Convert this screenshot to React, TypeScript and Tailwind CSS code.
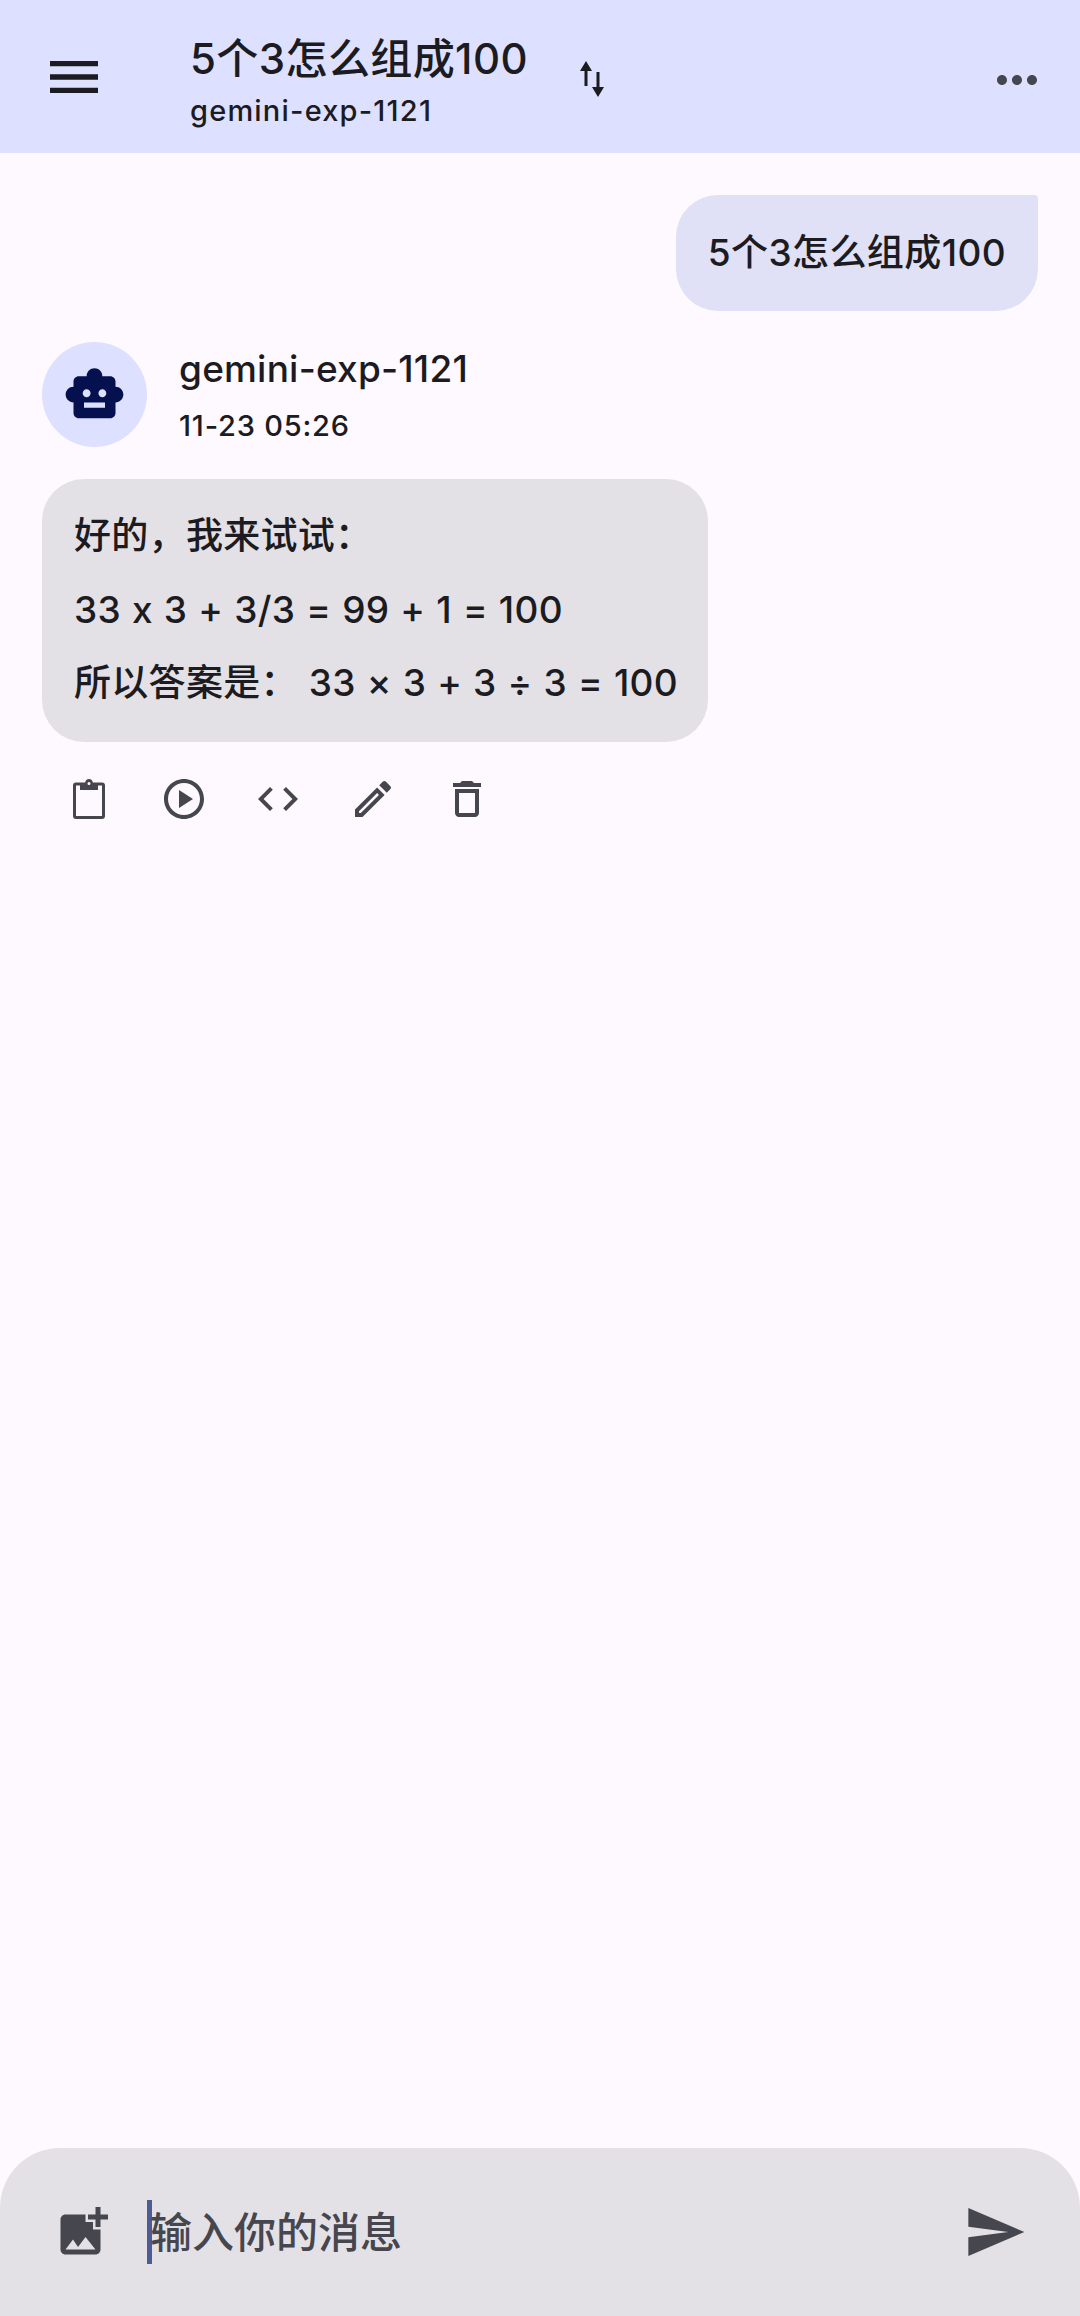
import React from 'react';
import {
  MdMenu,
  MdMoreHoriz,
  MdSmartToy,
  MdOutlinePlayCircle,
  MdCode,
  MdOutlineEdit,
  MdOutlineDelete,
  MdAddPhotoAlternate,
  MdSend,
} from 'react-icons/md';

const FONT = "font-['Inter','Noto_Sans_CJK_SC',sans-serif] [font-feature-settings:'calt'_0]";

const SwapIcon = () => (
  <svg viewBox="0 0 28 36" className="w-[28px] h-[36px]" fill="#1b1b21">
    <path d="M8 0 L14 10 H9.5 V25 H6.5 V10 H2 Z" />
    <path d="M20 36 L14 26 H18.5 V11 H21.5 V26 H26 Z" />
  </svg>
);

// narrower than the material paste icon
const ClipboardIcon = ({ className }: { className?: string }) => (
  <svg viewBox="0 0 48 48" className={className} fill="none">
    <path
      fill="currentColor"
      fillRule="evenodd"
      d="M24 4a4 4 0 0 1 3.8 3.5H37a3 3 0 0 1 3 3V41a3 3 0 0 1-3 3H11a3 3 0 0 1-3-3V10.500a3 3 0 0 1 3-3h9.200A4 4 0 0 1 24 4Zm0 3a1.500 1.500 0 1 0 0 3 1.500 1.500 0 0 0 0-3ZM11 10.500V41h26V10.500h-4V15H15v-4.500h-4Z"
    />
  </svg>
);

const actions = [ClipboardIcon, MdOutlinePlayCircle, MdCode, MdOutlineEdit, MdOutlineDelete];

export default function App() {
  return (
    <div className={`${FONT} w-[1080px] h-[2316px] bg-[#fef8ff] text-[#1b1b21] font-medium flex flex-col overflow-hidden`}>
      <header className="h-[153px] bg-[#dde1ff] flex items-center shrink-0">
        <MdMenu className="ml-[42px] w-[64px] h-[64px] text-[#1b1b21] shrink-0" />
        <div className="ml-[84px] flex flex-col mt-[9px]">
          <div className="text-[42px] leading-[56px] tracking-[0.4px]">5个3怎么组成100</div>
          <div className="text-[29px] leading-[40px] mt-[4px] tracking-[1.2px]">gemini-exp-1121</div>
        </div>
        <div className="ml-[50px] mt-[4px] flex">
          <SwapIcon />
        </div>
        <MdMoreHoriz className="ml-auto mr-[33px] mt-[6px] w-[60px] h-[60px] text-[#46464f]" />
      </header>

      <main className="flex-1 flex flex-col min-h-0">
        <div className="flex justify-end pr-[42px] pt-[42px]">
          <div className="h-[116px] px-[32px] bg-[#e0e0f6] rounded-[42px] rounded-tr-[4px] flex items-center text-[37px] tracking-[0.4px]">
            5个3怎么组成100
          </div>
        </div>

        <div className="flex items-center pl-[42px] mt-[31px]">
          <div className="w-[105px] h-[105px] rounded-full bg-[#dde1ff] flex items-center justify-center">
            <MdSmartToy className="w-[63px] h-[63px] text-[#05104f]" />
          </div>
          <div className="ml-[32px] flex flex-col">
            <div className="text-[37px] leading-[50px] -mt-[1px] tracking-[0.2px]">gemini-exp-1121</div>
            <div className="text-[29px] leading-[38px] mt-[13px] tracking-[0.8px]">11-23 05:26</div>
          </div>
        </div>

        <div className="ml-[42px] mt-[32px] w-[666px] h-[263px] bg-[#e3e1e6] rounded-[42px] pl-[32px] pt-[20px] text-[37px] leading-[73.5px] tracking-[0.3px] [word-spacing:0.8px] whitespace-nowrap">
          <div>好的，我来试试：</div>
          <div>33 x 3 + 3/3 = 99 + 1 = 100</div>
          <div>所以答案是：&nbsp;33 × 3 + 3 ÷ 3 = 100</div>
        </div>

        <div className="flex pl-[42px] mt-[15px]">
          {actions.map((Icon, i) => (
            <div key={i} className="w-[94.5px] h-[84px] flex items-center justify-center">
              <Icon className="w-[48px] h-[48px] text-[#46464f]" />
            </div>
          ))}
        </div>
      </main>

      <footer className="h-[168px] shrink-0 bg-[#e3e1e6] rounded-t-[60px] flex items-center">
        <MdAddPhotoAlternate className="ml-[53px] w-[60px] h-[60px] text-[#46464f]" />
        <div className="ml-[34px] w-[5px] h-[64px] bg-[#4d5c92]" />
        <div className="-ml-[2px] text-[42px] text-[#46464f]">输入你的消息</div>
        <MdSend className="ml-auto mr-[53px] w-[64px] h-[64px] text-[#46464f]" />
      </footer>
    </div>
  );
}
